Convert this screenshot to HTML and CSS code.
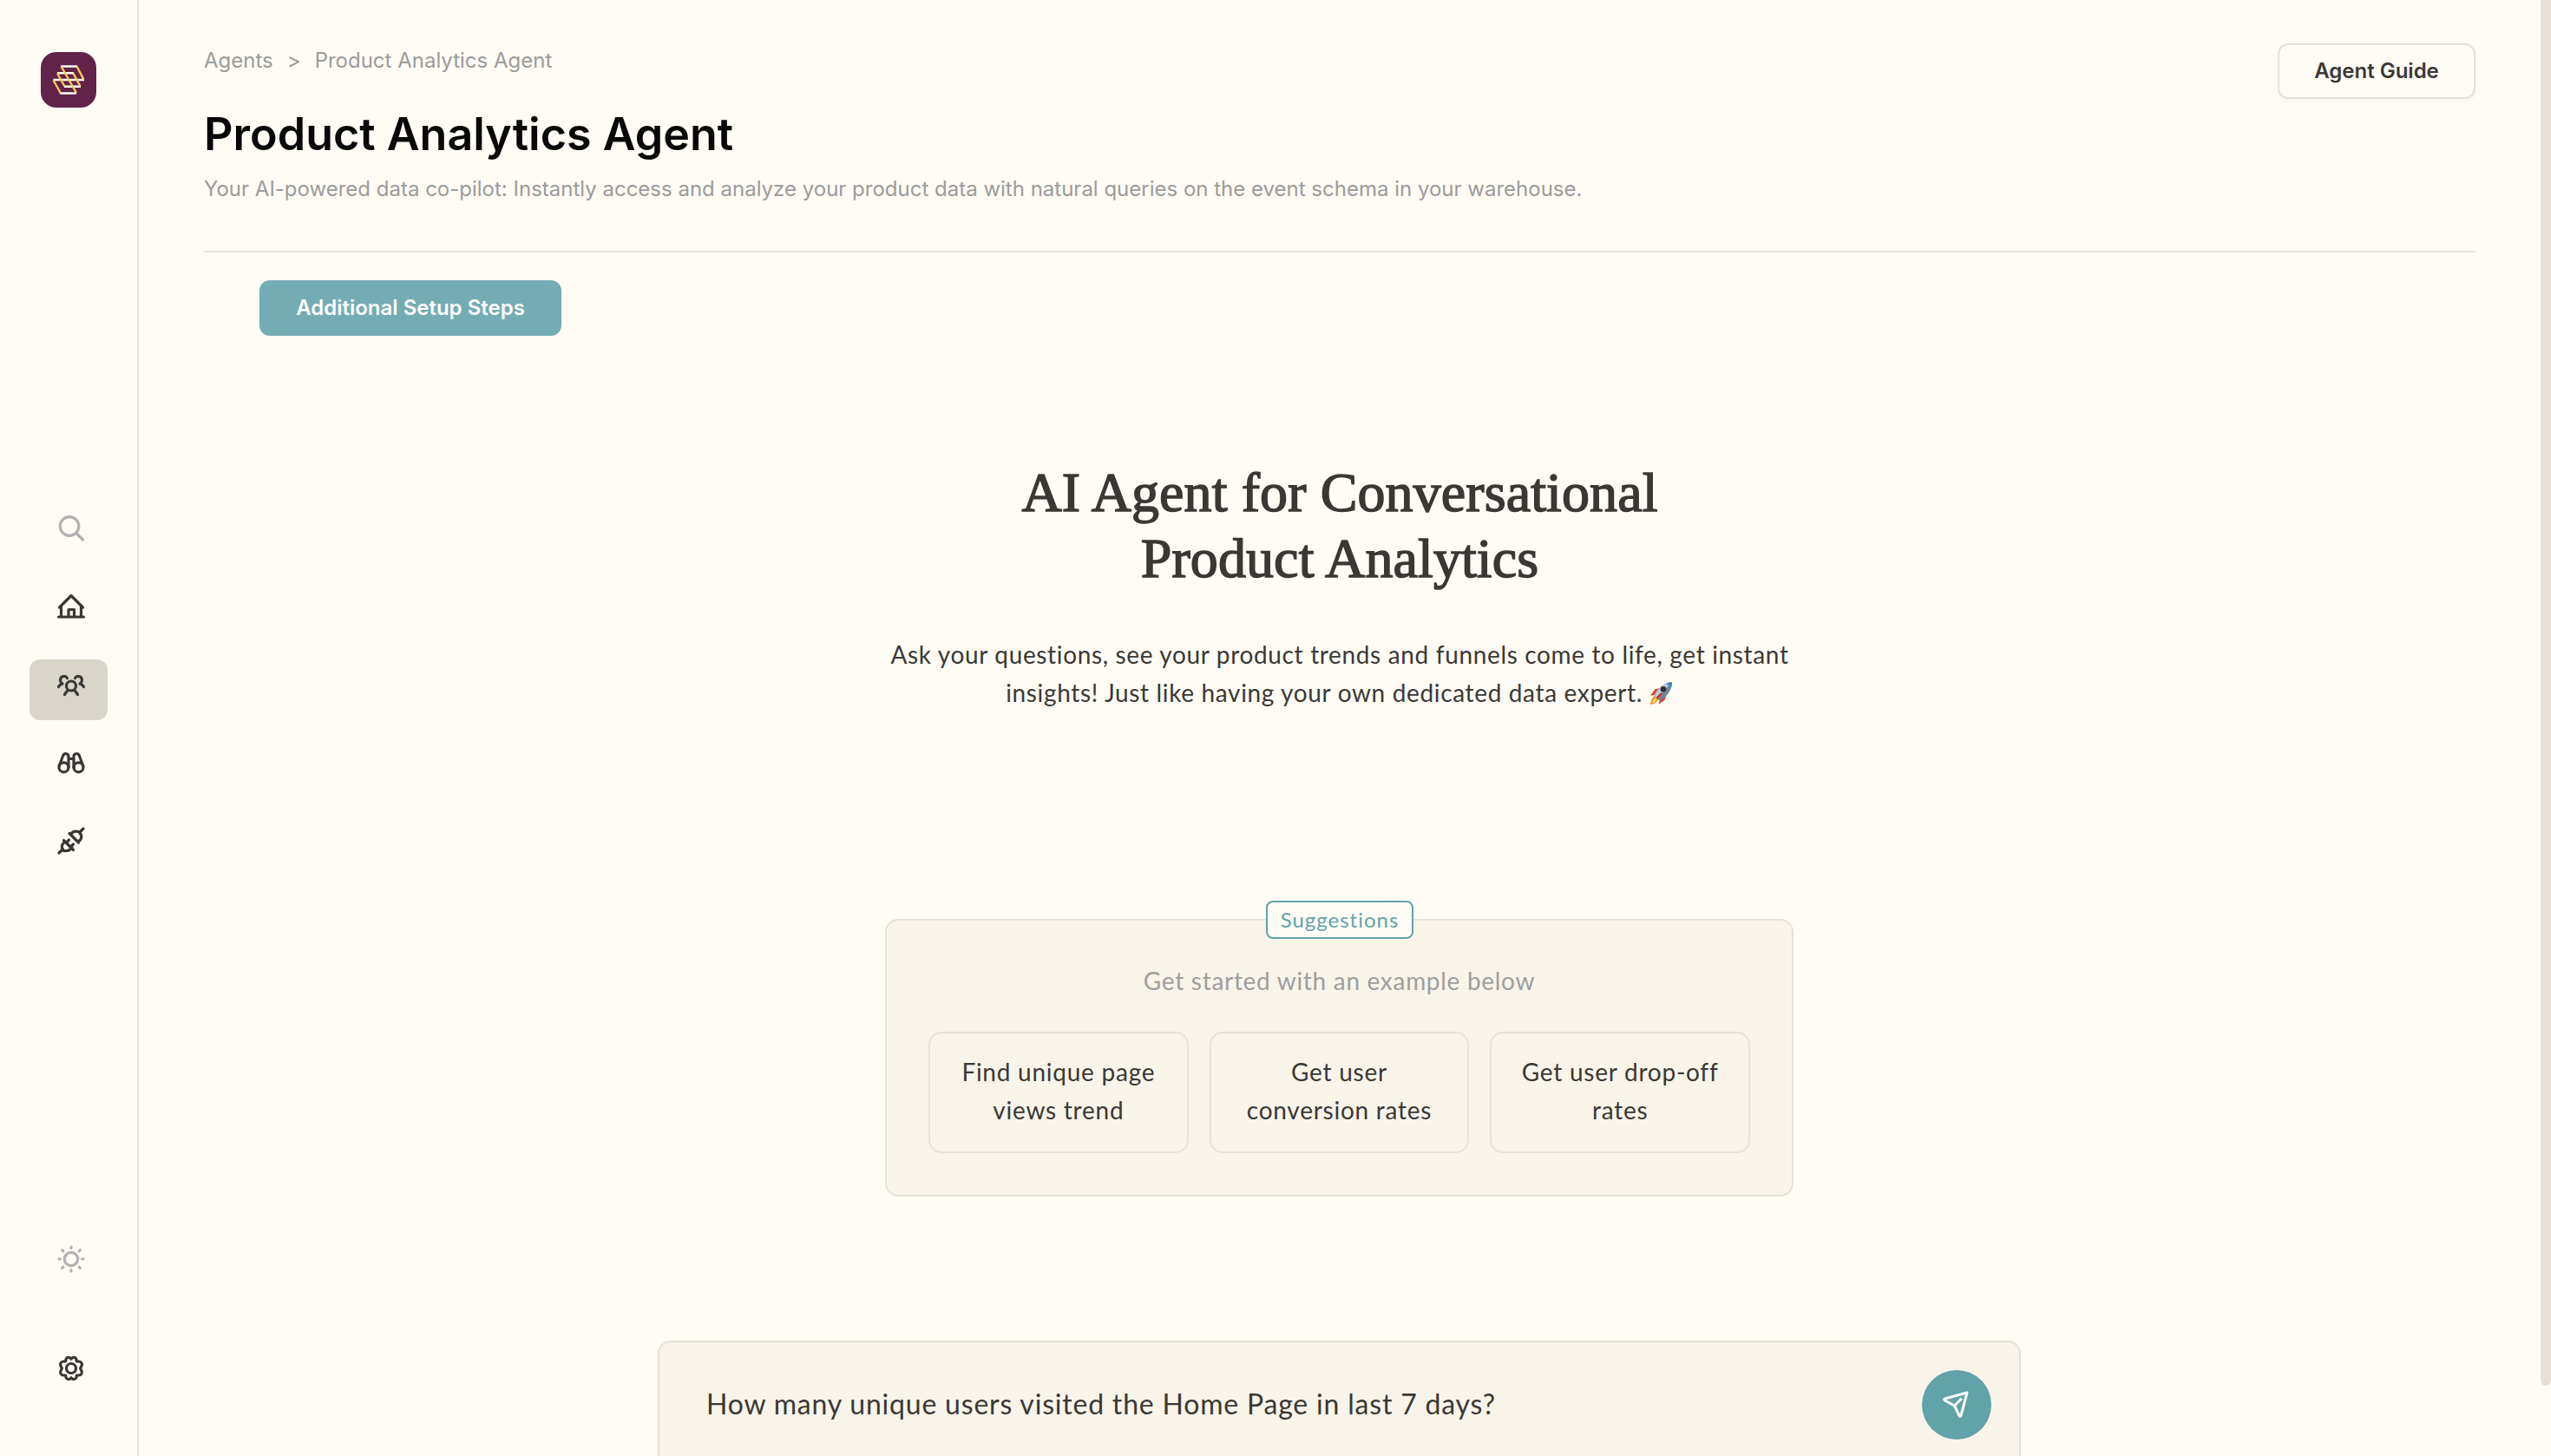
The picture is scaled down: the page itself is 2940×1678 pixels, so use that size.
FILE: index.html
```
<!DOCTYPE html>
<html lang="en">
<head>
    <meta charset="UTF-8">
    <title>Product Analytics Agent</title>
    <link rel="stylesheet" href="styles.css">
</head>
<body>
<div class="app">
    <nav class="sidebar">
        <a class="logo" href="#">
            <svg width="64" height="64" viewBox="0 0 64 64">
                <g fill="none" stroke="#fff" stroke-width="2.4">
                    <path d="M23 16.5H42M19 24.3H38M14.5 32H50M27 39.700H46M22 47.500H41"/>
                </g>
                <g fill="none" stroke="#f8cb55" stroke-width="2.4">
                    <path d="M23.500 16.500 41 47M41.500 16.500 49.500 31.500M19 24.500 27.500 39.500M37.500 24.500 45.500 39.500M14.500 32.500 23 47.500"/>
                </g>
            </svg>
        </a>
        <ul class="menu">
            <li class="muted">
                <svg class="icon" viewBox="0 0 36 36"><circle cx="16" cy="15.500" r="10.800"/><path d="M24 23.500l7.500 7.500"/></svg>
            </li>
            <li>
                <svg class="icon" viewBox="0 0 36 36"><path d="M3.500 30h29M6.500 30V17.500M29.500 30V17.500M4.500 19 18 5.500 31.500 19M15 30v-8.500h6.500V30"/></svg>
            </li>
            <li class="active">
                <svg class="icon" viewBox="0 0 36 36"><circle cx="18" cy="18.500" r="5.500"/><path d="M10.500 28.500c1-2 2-3.500 4-5M25.500 28.500c-1-2-2-3.500-4-5M13.500 9.500C11.500 6 5.500 7 5.500 12c0 1.800 1 3 2.500 4-2.200.5-3.500 1.500-4.500 3.500M22.500 9.500C24.500 6 30.500 7 30.500 12c0 1.800-1 3-2.500 4 2.200.5 3.500 1.500 4.500 3.500"/></svg>
            </li>
            <li>
                <svg class="icon" viewBox="0 0 36 36"><circle cx="9.500" cy="23.300" r="5.500"/><circle cx="26.500" cy="23.300" r="5.500"/><path d="M4.300 21.500 9 9c1.500-2.500 6-1.500 6 1.500v13M31.700 21.500 27 9c-1.500-2.500-6-1.500-6 1.500v13M15 13.500h6"/></svg>
            </li>
            <li>
                <svg class="icon" viewBox="0 0 36 36"><path d="M4 32l4.500-4.500M32 4l-4.500 4.500M9.500 17.500l11 11M11 19c-5.500 4-4.500 11 1.500 10.500 3 0 5-1.500 6.500-3.500M12.500 20l3-3M17.500 25l3-3M16 9.500l10.500 10.500M17.500 11c2-4.500 8-5 10.500-2 3 3 2 8.500-2.500 10"/></svg>
            </li>
        </ul>
        <ul class="tools">
            <li class="muted">
                <svg class="icon" viewBox="0 0 36 36"><circle cx="18" cy="18" r="7.700"/><path d="M18 4v1.500M18 30.500V32M4 18h1.500M30.500 18H32M7.700 7.700l1.100 1.100M27.200 27.200l1.100 1.100M7.700 28.300l1.100-1.100M27.200 8.800l1.100-1.100"/></svg>
            </li>
            <li>
                <svg class="icon" viewBox="0 0 36 36"><circle cx="18" cy="18" r="5.500"/><path d="M18 7.200C19.500 4.700 23 5 24 7.300L24.300 9.800 26.600 10C29.600 9.800 31.500 13 29.800 15.500L28.600 18 29.800 20.500C31.500 23 29.600 26.200 26.600 26L24.300 26.200 24 28.700C23 31 19.500 31.300 18 28.800 16.500 31.300 13 31 12 28.700L11.700 26.200 9.400 26C6.400 26.200 4.500 23 6.200 20.500L7.400 18 6.200 15.500C4.500 13 6.400 9.800 9.400 10L11.700 9.800 12 7.300C13 5 16.500 4.700 18 7.200Z"/></svg>
            </li>
        </ul>
    </nav>

    <main class="content">
        <header class="page-header">
            <div>
                <div class="breadcrumb"><span>Agents</span><span>&gt;</span><span>Product Analytics Agent</span></div>
                <h1>Product Analytics Agent</h1>
                <p class="description">Your AI-powered data co-pilot: Instantly access and analyze your product data with natural queries on the event schema in your warehouse.</p>
            </div>
            <button class="btn btn-outline">Agent Guide</button>
        </header>
        <button class="btn btn-setup">Additional Setup Steps</button>

        <section class="intro">
            <h2>AI Agent for Conversational<br>Product Analytics</h2>
            <p>Ask your questions, see your product trends and funnels come to life, get instant<br>insights! Just like having your own dedicated data expert.
                <svg class="rocket" width="28" height="28" viewBox="0 0 30 30">
                    <path d="M7 17l-6 1 6-8 8-2zM13 23l-2 6 8-6 2-7z" fill="#d8412f"/>
                    <path d="M7 18c-4 2-5 6-6 11 5-1 9-3 10-7z" fill="#f58a1f"/>
                    <path d="M7 21c-2 1-3 3-4 6 3-1 5-2 6-4z" fill="#ffe45c"/>
                    <path d="M6 18C9 10 16 3 28 1c0 10-7 19-16 23z" fill="#71859c"/>
                    <path d="M6 18C9 10 16 3 28 1L9 21z" fill="#bccbd9"/>
                    <path d="M20 3c3-1 5-2 8-2 0 3-1 6-2 8-1-3-3-5-6-6z" fill="#3f83c5"/>
                    <circle cx="17" cy="10" r="3.500" fill="#322c34"/>
                    <path d="M9 21l6-6" stroke="#c43329" stroke-width="2.500"/>
                </svg>
            </p>
        </section>

        <section class="suggestions">
            <span class="badge">Suggestions</span>
            <p class="hint">Get started with an example below</p>
            <div class="cards">
                <div class="card"><span>Find unique page</span><span>views trend</span></div>
                <div class="card"><span>Get user</span><span>conversion rates</span></div>
                <div class="card"><span>Get user drop-off</span><span>rates</span></div>
            </div>
        </section>

        <div class="prompt">
            <span class="question">How many unique users visited the Home Page in last 7 days?</span>
            <button class="send">
                <svg width="36" height="36" viewBox="0 0 36 36"><path d="M30 4 4.500 11c-1 .5-1 1.500 0 2L15.500 19 21 30.500c.5 1 1.500 1 2 0zM15.500 19l7.500-7.500"/></svg>
            </button>
        </div>
    </main>
    <div class="scrollbar"></div>
</div>
</body>
</html>
```
FILE: styles.css
```
*{
    margin: 0;
    padding: 0;
    box-sizing: border-box;
    list-style: none;
}
body{
    background: #fffcf5;
    color: #3a3835;
    font-family: Inter, sans-serif;
    overflow: hidden;
}
.app{
    display: flex;
    height: 1678px;
    overflow: hidden;
}

/* sidebar */
.sidebar{
    width: 160px;
    flex: none;
    display: flex;
    flex-direction: column;
    border-right: 2px solid #e8e1d8;
    padding: 60px 34px 83px;
}
.logo{
    width: 64px;
    height: 64px;
    margin-left: 13px;
    background: #62224a;
    border-radius: 18px;
}
.logo svg{
    display: block;
}
.menu{
    margin-top: 455px;
    display: flex;
    flex-direction: column;
    gap: 20px;
}
.menu li{
    height: 70px;
    padding: 12px 0 0 30px;
    border-radius: 12px;
}
.menu .active{
    margin: 1px 0 -1px;
    background: #d9d5ca;
}
.tools{
    margin-top: auto;
    padding-left: 30px;
    display: flex;
    flex-direction: column;
    gap: 90px;
}
.icon{
    display: block;
    width: 36px;
    height: 36px;
    fill: none;
    stroke: #3a3835;
    stroke-width: 3.2;
    stroke-linecap: round;
    stroke-linejoin: round;
}
.muted .icon{
    stroke: #b1b1b1;
}

/* content */
.content{
    flex: 1;
    min-width: 0;
    padding: 50px 75px 0;
    display: flex;
    flex-direction: column;
    align-items: center;
}
.page-header{
    width: 100%;
    height: 241px;
    flex: none;
    display: flex;
    justify-content: space-between;
    align-items: flex-start;
    border-bottom: 2px solid #e8e1d8;
}
.breadcrumb{
    display: flex;
    gap: 16px;
    font-size: 24px;
    line-height: 40px;
    color: #9b9b9b;
}
h1{
    margin-top: 30px;
    font-size: 52px;
    font-weight: 600;
    line-height: 70px;
    color: #080808;
}
.description{
    margin-top: 10px;
    font-size: 24px;
    line-height: 36px;
    color: #9b9b9b;
}
.btn{
    height: 64px;
    padding-bottom: 2px;
    border-radius: 12px;
    font: 600 24px Inter, sans-serif;
    text-align: center;
}
.btn-outline{
    width: 228px;
    border: 2px solid #e8e1d8;
    background: #fffcf5;
    color: #3a3835;
    box-shadow: 0 4px 0 rgba(0, 0, 0, .02);
}
.btn-setup{
    align-self: flex-start;
    flex: none;
    width: 348px;
    margin: 32px 0 0 64px;
    border: none;
    background: #74acb3;
    color: #fff;
}

/* intro */
.intro{
    margin-top: 143px;
    text-align: center;
    font-family: Lato, sans-serif;
    white-space: nowrap;
}
h2{
    font: 400 64px/76px "Liberation Serif", serif;
    letter-spacing: .1px;
    -webkit-text-stroke: 1.5px #3a3835;
}
.intro p{
    height: 88px;
    margin-top: 50px;
    font-size: 28px;
    line-height: 44px;
    letter-spacing: .65px;
}
.rocket{
    vertical-align: -4px;
}

/* suggestions */
.suggestions{
    position: relative;
    flex: none;
    width: 1047px;
    height: 320px;
    margin: 239px 1px 0 0;
    padding: 47px 48px 0;
    border: 2px solid #e8e1d8;
    border-radius: 15px;
    background: #f8f4ea;
    font-family: Lato, sans-serif;
    text-align: center;
}
.badge{
    position: absolute;
    top: -23px;
    left: 437px;
    width: 170px;
    height: 44px;
    border: 2px solid #62a2a9;
    border-radius: 8px;
    background: #fffcf5;
    color: #62a2a9;
    font-size: 24px;
    line-height: 40px;
    letter-spacing: 1px;
}
.hint{
    font-size: 28px;
    line-height: 44px;
    letter-spacing: .7px;
    color: #9e9e9e;
}
.cards{
    display: grid;
    grid-template-columns: repeat(3, 1fr);
    gap: 24px;
    margin-top: 37px;
}
.card{
    height: 140px;
    padding-top: 22px;
    border: 2px solid #e7e2d7;
    border-radius: 15px;
    font-size: 28px;
    line-height: 44px;
    letter-spacing: .75px;
}
.card span{
    display: block;
}

/* prompt */
.prompt{
    flex: none;
    width: 1571px;
    height: 160px;
    margin: 166px 1px 0 0;
    padding: 32px 32px 0 54px;
    display: flex;
    justify-content: space-between;
    border: 2px solid #e8e1d8;
    border-radius: 15px;
    background: #f8f4ea;
}
.question{
    font: 32px/78px Lato, sans-serif;
    letter-spacing: .8px;
}
.send{
    width: 80px;
    height: 80px;
    border: none;
    border-radius: 50%;
    background: #62a2a9;
}
.send svg{
    display: block;
    margin: 0 auto;
    fill: none;
    stroke: #fff;
    stroke-width: 3;
    stroke-linejoin: round;
    stroke-linecap: round;
}

.scrollbar{
    flex: none;
    width: 12px;
    height: 1597px;
    background: #e8e0d8;
    border-radius: 0 0 6px 6px;
}
```
